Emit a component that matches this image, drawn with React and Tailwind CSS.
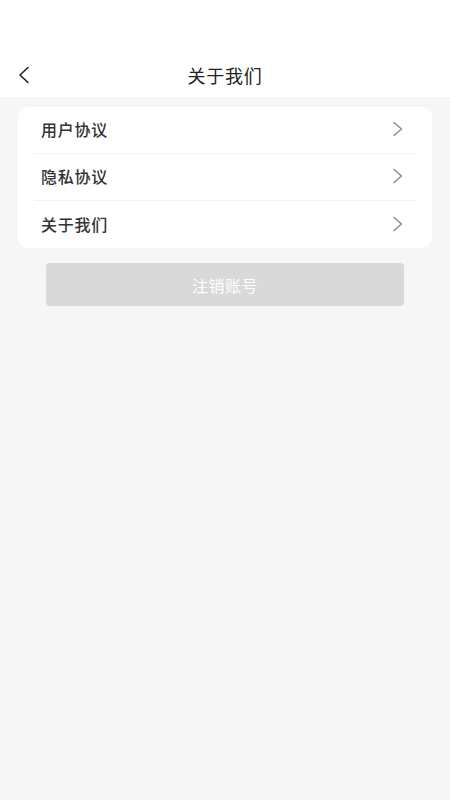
import { useState } from 'react';

const items = ['用户协议', '隐私协议', '关于我们'];

const Chevron = () => (
    <svg width="12" height="16" viewBox="0 0 12 16" fill="none">
        <path d="M2 1.5 L9.5 8 L2 14.5" stroke="#8a8a8a" strokeWidth="1.4" strokeLinecap="round" strokeLinejoin="round" />
    </svg>
);

const App = () => {
    const [active, setActive] = useState(null);

    return (
        <div
            className="min-h-screen w-[450px] bg-[#f6f6f6]"
            style={{ fontFamily: '"Noto Sans CJK SC", "Noto Sans", sans-serif' }}
        >
            {/* Header */}
            <div className="bg-white h-[97px] pt-[52px]">
                <div className="relative flex items-center justify-center h-[46px]">
                    <button className="absolute left-[16px] top-[14px]" onClick={() => setActive(null)}>
                        <svg width="16" height="18" viewBox="0 0 16 18" fill="none">
                            <path d="M12 1.5 L4 9 L12 16.5" stroke="#222" strokeWidth="1.6" strokeLinecap="round" strokeLinejoin="round" />
                        </svg>
                    </button>
                    <h1 className="text-[18px] tracking-[0.75px] text-[#222] leading-none">关于我们</h1>
                </div>
            </div>

            {/* Menu card */}
            <div className="mx-[18px] mt-[10px] bg-white rounded-[10px] px-[16px]">
                {items.map((item, i) => (
                    <div
                        key={item}
                        onClick={() => setActive(i)}
                        className={`flex items-center justify-between h-[47px] pl-[7px] pr-[12px] pb-[2px] ${i < items.length - 1 ? 'border-b border-[#f1f1f1]' : ''}`}
                    >
                        <span className="text-[16px] tracking-[0.75px] font-medium text-[#333]">{item}</span>
                        <Chevron />
                    </div>
                ))}
            </div>

            {/* Cancel account */}
            <div className="mx-[46px] mt-[15px]">
                <button className="w-full h-[43px] rounded-[4px] bg-[#d9d9d9] text-white text-[16px] tracking-[0.5px]">
                    注销账号
                </button>
            </div>
        </div>
    );
};

export default App;
